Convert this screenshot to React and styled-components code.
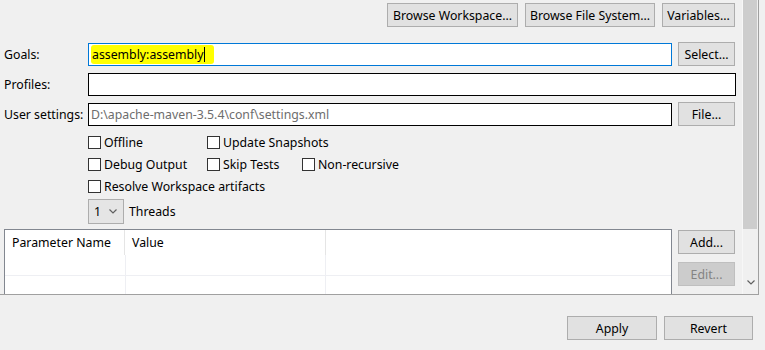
import React from "react";
import styled, { createGlobalStyle } from "styled-components";

const GlobalStyle = createGlobalStyle`
  html, body {
    margin: 0;
    padding: 0;
    background: #f0f0f0;
  }
  body {
    font-family: "Noto Sans", "Open Sans", "Liberation Sans", sans-serif;
    font-size: 12.3px;
    color: #000;
  }
`;

const Page = styled.div`
  width: 765px;
  height: 350px;
  display: flex;
  flex-direction: column;
  overflow: hidden;
`;

const ScrollArea = styled.div`
  width: 758px;
  height: 294px;
  display: flex;
  border-right: 1px solid #a0a0a0;
  border-bottom: 1px solid #a0a0a0;
  overflow: hidden;
`;

const Content = styled.div`
  width: 743px;
  display: flex;
  flex-direction: column;
  padding: 3px 7px 0 4px;
  box-sizing: border-box;
`;

const Scrollbar = styled.div`
  width: 15px;
  background: #f0f0f0;
  border-left: 1px solid #f7f7f7;
  display: flex;
  flex-direction: column;
  align-items: center;
`;

const Thumb = styled.div`
  width: 14px;
  height: 229px;
  background: #cdcdcd;
  align-self: flex-start;
`;

const ArrowDown = styled.div`
  margin-top: auto;
  height: 17px;
  display: flex;
  align-items: center;
  justify-content: center;
  padding-bottom: 3px;
`;

const TopBar = styled.div`
  display: flex;
  justify-content: flex-end;
  gap: 7px;
`;

const Button = styled.button`
  height: 24px;
  width: ${(p) => (p.$w ? `${p.$w}px` : "auto")};
  padding: 0;
  box-sizing: border-box;
  background: ${(p) => (p.disabled ? "#cccccc" : "#e1e1e1")};
  border: 1px solid ${(p) => (p.disabled ? "#bfbfbf" : "#adadad")};
  color: ${(p) => (p.disabled ? "#838383" : "#000")};
  font-family: inherit;
  font-size: 12.3px;
  white-space: nowrap;
  flex-shrink: 0;
`;

const Form = styled.div`
  margin-top: 15px;
  display: flex;
  flex-direction: column;
  gap: 6px;
`;

const Row = styled.div`
  display: flex;
  align-items: center;
  height: 24px;
`;

const Label = styled.div`
  width: 84px;
  flex-shrink: 0;
`;

const Field = styled.div`
  flex: 1;
  height: 23px;
  box-sizing: border-box;
  background: #fff;
  border: 1px solid ${(p) => (p.$focused ? "#0078d7" : "#000")};
  margin-right: ${(p) => (p.$wide ? "-1px" : "6px")};
  display: flex;
  align-items: center;
  padding-left: 2px;
  color: ${(p) => (p.$muted ? "#6d6d6d" : "#000")};
  white-space: nowrap;
  overflow: hidden;
`;

const Highlight = styled.span`
  display: inline-flex;
  align-items: center;
  height: 19px;
  background: #ffff00;
  padding: 0 9px 0 1px;
  border-radius: 3px;
`;

const Caret = styled.span`
  display: inline-block;
  width: 1px;
  height: 15px;
  background: #000;
`;

const Options = styled.div`
  margin-top: 5px;
  margin-left: 84px;
  display: grid;
  grid-template-columns: 119px 95px auto;
  grid-auto-rows: 22px;
`;

const Check = styled.label`
  display: flex;
  align-items: center;
  gap: 3px;
  grid-column: ${(p) => (p.$span ? "1 / -1" : "auto")};
  white-space: nowrap;
`;

const Box = styled.span`
  width: 13px;
  height: 13px;
  box-sizing: border-box;
  border: 1px solid #333;
  background: #fff;
  flex-shrink: 0;
`;

const ThreadsRow = styled.div`
  margin-top: 2px;
  margin-left: 84px;
  display: flex;
  align-items: center;
  gap: 5px;
  height: 25px;
`;

const Combo = styled.div`
  width: 36px;
  height: 25px;
  box-sizing: border-box;
  background: #e5e5e5;
  border: 1px solid #adadad;
  display: flex;
  align-items: center;
  justify-content: space-between;
  padding: 0 6px 0 5px;
`;

const TableRow = styled.div`
  margin-top: 5px;
  display: flex;
  gap: 6px;
  align-items: flex-start;
`;

const Table = styled.div`
  flex: 1;
  height: 90px;
  background: #fff;
  border: 1px solid #828790;
  display: flex;
  flex-direction: column;
`;

const Header = styled.div`
  display: grid;
  grid-template-columns: 120px 201px 1fr;
  height: 25px;
`;

const HeadCell = styled.div`
  display: flex;
  align-items: center;
  padding-left: 7px;
  border-right: 1px solid ${(p) => (p.$last ? "transparent" : "#e5e5e5")};
`;

const BodyRow = styled.div`
  display: grid;
  grid-template-columns: 121px 200px 1fr;
  height: 20px;
  border-bottom: 1px solid #eeeff3;
`;

const BodyCell = styled.div`
  border-right: 1px solid ${(p) => (p.$last ? "transparent" : "#eeeff3")};
`;

const SideButtons = styled.div`
  display: flex;
  flex-direction: column;
  gap: 8px;
  padding-top: 1px;
`;

const Footer = styled.div`
  display: flex;
  justify-content: flex-end;
  gap: 7px;
  padding: 21px 12px 0 0;
`;

const Chevron = ({ color = "#606060" }) => (
  <svg width="8" height="5" viewBox="0 0 8 5">
    <path d="M0.5 0.5 L4 4 L7.5 0.5" fill="none" stroke={color} strokeWidth="1.2" />
  </svg>
);

const checks = [
  { label: "Offline" },
  { label: "Update Snapshots" },
  { label: "", empty: true },
  { label: "Debug Output" },
  { label: "Skip Tests" },
  { label: "Non-recursive" },
  { label: "Resolve Workspace artifacts", span: true },
];

export default function App() {
  return (
    <Page>
      <GlobalStyle />
      <ScrollArea>
        <Content>
          <TopBar>
            <Button $w={131}>Browse Workspace...</Button>
            <Button $w={130}>Browse File System...</Button>
            <Button $w={73}>Variables...</Button>
          </TopBar>

          <Form>
            <Row>
              <Label>Goals:</Label>
              <Field $focused>
                <Highlight>
                  assembly:assembly
                  <Caret />
                </Highlight>
              </Field>
              <Button $w={57}>Select...</Button>
            </Row>
            <Row>
              <Label>Profiles:</Label>
              <Field $wide />
            </Row>
            <Row>
              <Label>User settings:</Label>
              <Field $muted>D:\apache-maven-3.5.4\conf\settings.xml</Field>
              <Button $w={57}>File...</Button>
            </Row>
          </Form>

          <Options>
            {checks.map((c, i) =>
              c.empty ? (
                <span key={i} />
              ) : (
                <Check key={i} $span={c.span}>
                  <Box />
                  {c.label}
                </Check>
              )
            )}
          </Options>

          <ThreadsRow>
            <Combo>
              <span>1</span>
              <Chevron />
            </Combo>
            <span>Threads</span>
          </ThreadsRow>

          <TableRow>
            <Table>
              <Header>
                <HeadCell>Parameter Name</HeadCell>
                <HeadCell>Value</HeadCell>
                <HeadCell $last />
              </Header>
              {[0, 1, 2].map((r) => (
                <BodyRow key={r}>
                  <BodyCell />
                  <BodyCell />
                  <BodyCell $last />
                </BodyRow>
              ))}
            </Table>
            <SideButtons>
              <Button $w={57}>Add...</Button>
              <Button $w={57} disabled>
                Edit...
              </Button>
            </SideButtons>
          </TableRow>
        </Content>
        <Scrollbar>
          <Thumb />
          <ArrowDown>
            <Chevron color="#606060" />
          </ArrowDown>
        </Scrollbar>
      </ScrollArea>
      <Footer>
        <Button $w={90}>Apply</Button>
        <Button $w={89}>Revert</Button>
      </Footer>
    </Page>
  );
}
